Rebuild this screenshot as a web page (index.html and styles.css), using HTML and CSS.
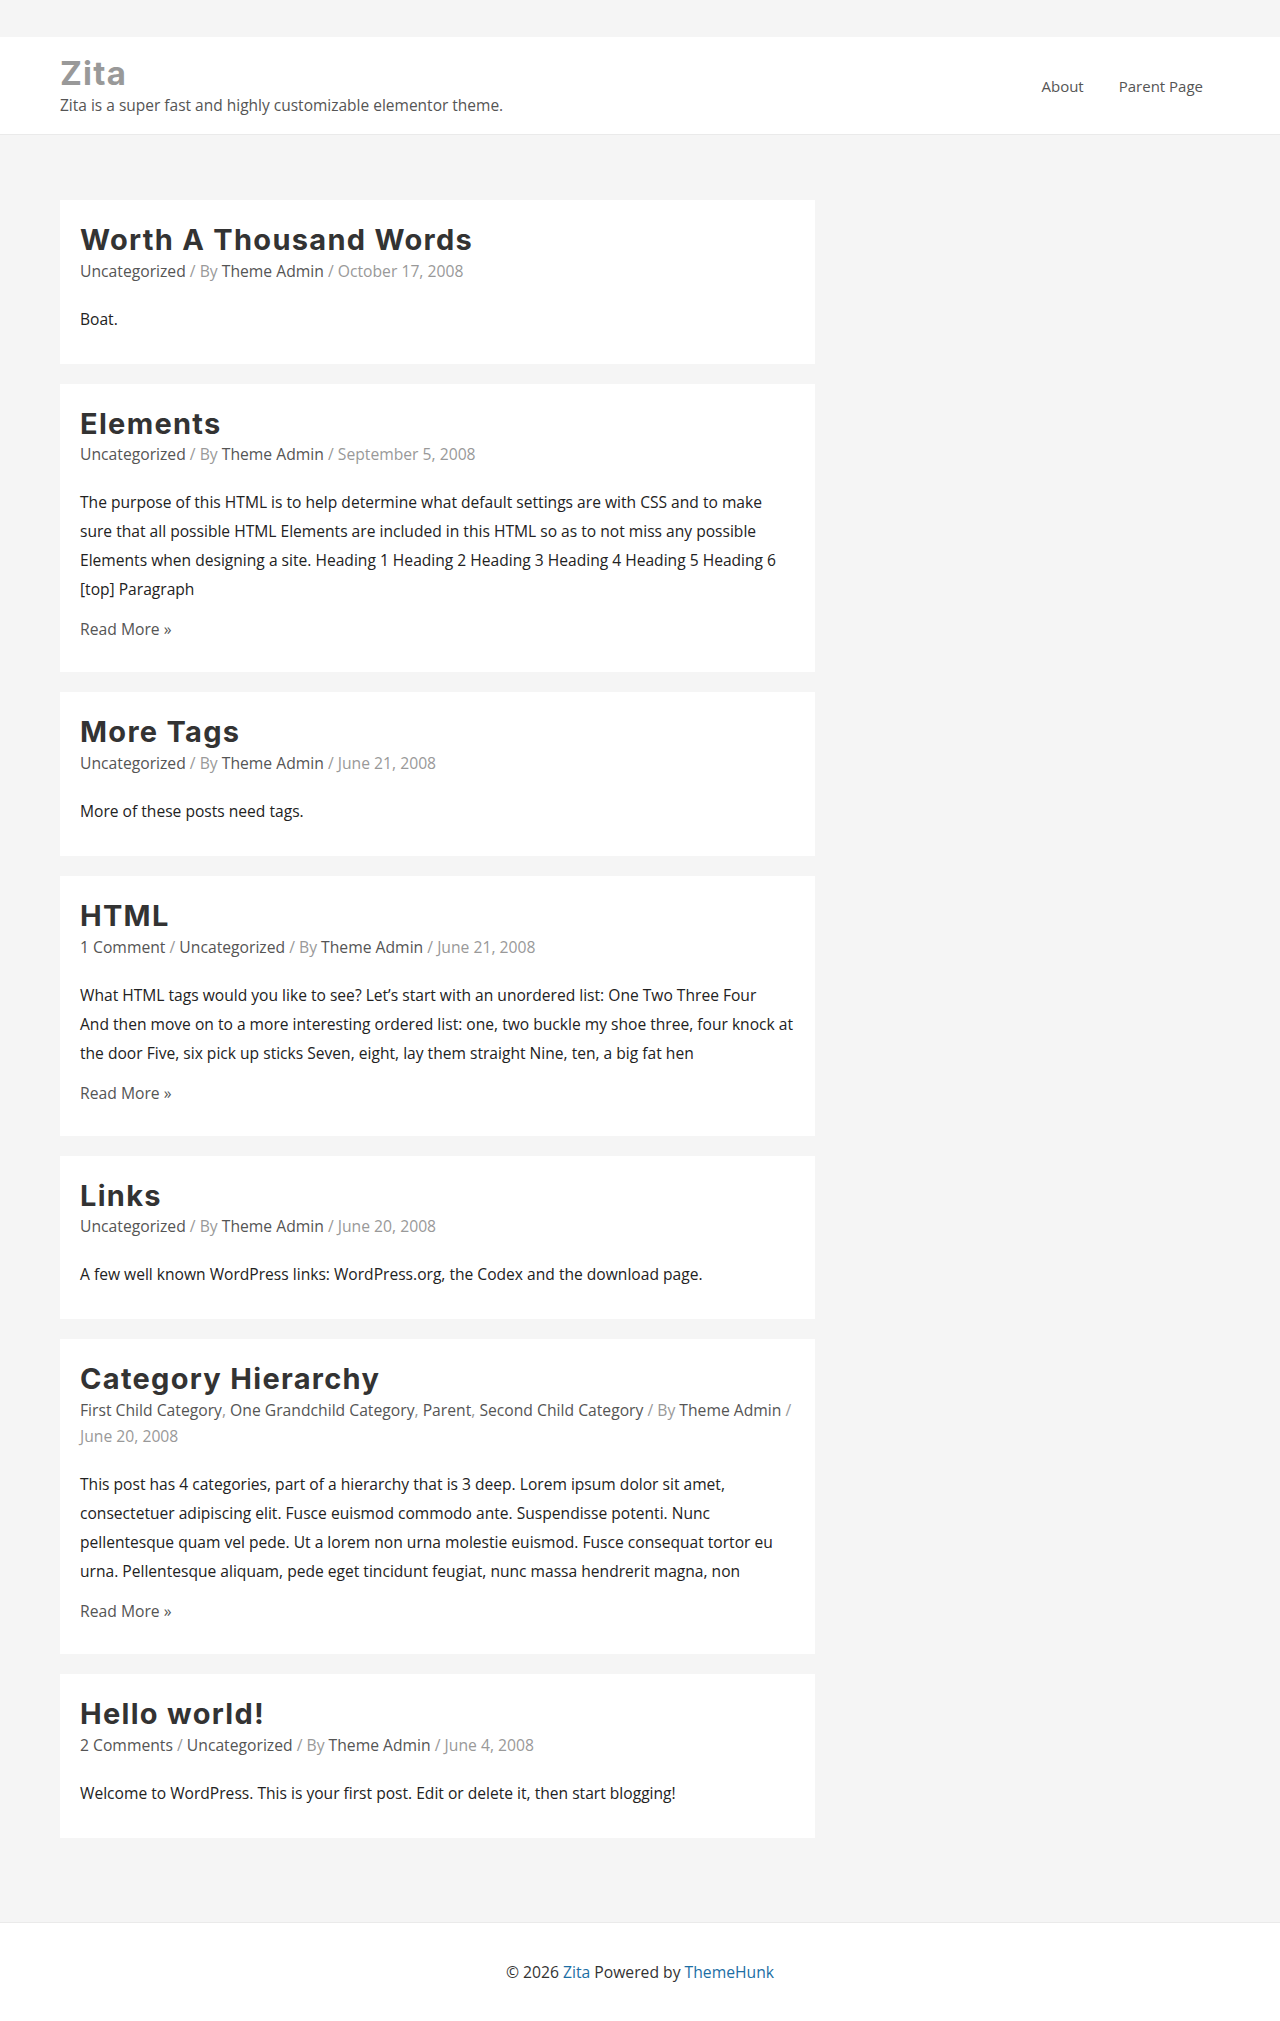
FILE: index.html
```html
<!DOCTYPE html>
<html lang="en">
<head>
    <meta charset="UTF-8">
    <meta name="viewport" content="width=device-width, initial-scale=1.0">
    <title>Zita</title>
    <link rel="stylesheet" href="styles.css">
</head>
<body>

    <header class="site-header">
        <div class="container header-inner">
            <div class="branding">
                <a href="#" class="site-title">Zita</a>
                <p class="site-description">Zita is a super fast and highly customizable elementor theme.</p>
            </div>
            <nav class="main-nav">
                <a href="#">About</a>
                <a href="#">Parent Page</a>
            </nav>
        </div>
    </header>

    <div class="container site-content">
        <main class="primary">

            <article class="post">
                <h2 class="entry-title"><a href="#">Worth A Thousand Words</a></h2>
                <div class="entry-meta">
                    <a href="#">Uncategorized</a> / By <a href="#">Theme Admin</a> / <span class="date">October 17, 2008</span>
                </div>
                <div class="entry-content">
                    <p>Boat.</p>
                </div>
            </article>

            <article class="post">
                <h2 class="entry-title"><a href="#">Elements</a></h2>
                <div class="entry-meta">
                    <a href="#">Uncategorized</a> / By <a href="#">Theme Admin</a> / <span class="date">September 5, 2008</span>
                </div>
                <div class="entry-content">
                    <p>The purpose of this HTML is to help determine what default settings are with CSS and to make sure that all possible HTML Elements are included in this HTML so as to not miss any possible Elements when designing a site. Heading 1 Heading 2 Heading 3 Heading 4 Heading 5 Heading 6 [top] Paragraph</p>
                    <a href="#" class="read-more">Read More &raquo;</a>
                </div>
            </article>

            <article class="post">
                <h2 class="entry-title"><a href="#">More Tags</a></h2>
                <div class="entry-meta">
                    <a href="#">Uncategorized</a> / By <a href="#">Theme Admin</a> / <span class="date">June 21, 2008</span>
                </div>
                <div class="entry-content">
                    <p>More of these posts need tags.</p>
                </div>
            </article>

            <article class="post">
                <h2 class="entry-title"><a href="#">HTML</a></h2>
                <div class="entry-meta">
                    <a href="#">1 Comment</a> / <a href="#">Uncategorized</a> / By <a href="#">Theme Admin</a> / <span class="date">June 21, 2008</span>
                </div>
                <div class="entry-content">
                    <p>What HTML tags would you like to see? Let&rsquo;s start with an unordered list: One Two Three Four And&nbsp;then move on to a more interesting ordered list: one, two buckle my shoe three, four knock at the door Five, six pick up sticks Seven, eight, lay them straight Nine, ten, a big fat hen</p>
                    <a href="#" class="read-more">Read More &raquo;</a>
                </div>
            </article>

            <article class="post">
                <h2 class="entry-title"><a href="#">Links</a></h2>
                <div class="entry-meta">
                    <a href="#">Uncategorized</a> / By <a href="#">Theme Admin</a> / <span class="date">June 20, 2008</span>
                </div>
                <div class="entry-content">
                    <p>A few well known WordPress links: WordPress.org, the Codex and the download page.</p>
                </div>
            </article>

            <article class="post">
                <h2 class="entry-title"><a href="#">Category Hierarchy</a></h2>
                <div class="entry-meta">
                    <a href="#">First Child Category</a>, <a href="#">One Grandchild Category</a>, <a href="#">Parent</a>, <a href="#">Second Child Category</a> / By <a href="#">Theme Admin</a> / <span class="date">June 20, 2008</span>
                </div>
                <div class="entry-content">
                    <p>This post has 4 categories, part of a hierarchy that is 3 deep. Lorem ipsum dolor sit amet, consectetuer adipiscing elit. Fusce euismod commodo ante. Suspendisse potenti. Nunc pellentesque quam vel pede. Ut a lorem non urna molestie euismod. Fusce consequat tortor eu urna. Pellentesque aliquam, pede eget tincidunt feugiat, nunc massa hendrerit magna, non</p>
                    <a href="#" class="read-more">Read More &raquo;</a>
                </div>
            </article>

            <article class="post">
                <h2 class="entry-title"><a href="#">Hello world!</a></h2>
                <div class="entry-meta">
                    <a href="#">2 Comments</a> / <a href="#">Uncategorized</a> / By <a href="#">Theme Admin</a> / <span class="date">June 4, 2008</span>
                </div>
                <div class="entry-content">
                    <p>Welcome to WordPress. This is your first post. Edit or delete it, then start blogging!</p>
                </div>
            </article>

        </main>
    </div>

    <footer class="site-footer">
        <div class="container">
            <p>&copy; 2026 <a href="#">Zita</a> Powered by <a href="#">ThemeHunk</a></p>
        </div>
    </footer>

</body>
</html>
```

FILE: styles.css
```css
body {
    font-family: 'Open Sans', 'Lato', sans-serif;
    font-size: 15.7px;
    background-color: #f5f5f5;
    color: #333;
    margin: 0;
    padding: 0;
}
a {
    text-decoration: none;
}
.container {
    width: 1160px;
    margin: 0 auto;
}
.site-header {
    background: #fff;
    border-bottom: 1px solid #eaeaea;
    margin-top: 37px;
}
.header-inner {
    display: flex;
    justify-content: space-between;
    align-items: center;
    height: 97px;
}
.site-title {
    font-family: 'Inter', 'Open Sans', sans-serif;
    font-size: 33px;
    font-weight: 700;
    line-height: 1.1;
    color: #999;
    letter-spacing: 1.2px;
}
.site-description {
    margin: 4px 0 0;
    color: #555;
    font-size: 15.5px;
    line-height: 1.4;
}
.main-nav {
    display: flex;
    gap: 35px;
    padding-right: 17px;
}
.main-nav a {
    color: #555;
    font-size: 15px;
}
.site-content {
    padding: 65px 0 64px;
}
.primary {
    width: 755px;
}
.post {
    background: #fff;
    padding: 21px 20px 30px;
    margin-bottom: 20px;
}
.entry-title {
    font-family: 'Inter', 'Open Sans', sans-serif;
    font-size: 29px;
    font-weight: 700;
    line-height: 1.3;
    letter-spacing: 1.3px;
    margin: 0;
}
.entry-title a {
    color: #333;
}
.entry-meta {
    color: #999;
    line-height: 26px;
    margin-top: -1px;
}
.entry-meta a {
    color: #555;
}
.entry-content {
    margin-top: 21px;
}
.entry-content p {
    margin: 0;
    font-size: 15.6px;
    line-height: 29px;
    color: #222;
}
.read-more {
    display: inline-block;
    margin-top: 12px;
    color: #555;
    line-height: 26px;
}
.site-footer {
    background: #fff;
    border-top: 1px solid #eaeaea;
    height: 99px;
}
.site-footer p {
    margin: 0;
    text-align: center;
    line-height: 99px;
    color: #333;
}
.site-footer a {
    color: #1c6ea4;
}
```
